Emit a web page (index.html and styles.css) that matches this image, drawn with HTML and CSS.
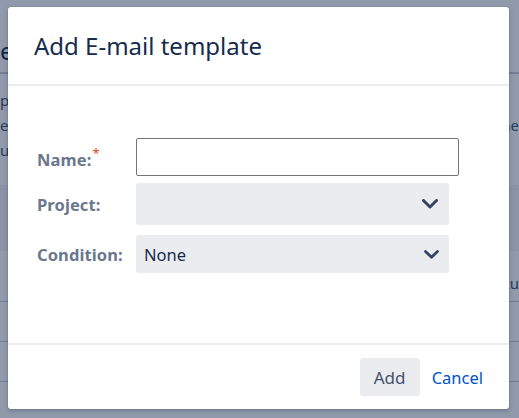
FILE: index.html
```html
<!DOCTYPE html>
<html>
<head>
<meta charset="utf-8">
<link rel="stylesheet" href="styles.css">
</head>
<body>
<div class="page">
  <div class="page-head"><span class="frag-title">e</span></div>
  <div class="page-text">
    <div class="trow"><span class="frag">p</span></div>
    <div class="trow"><span class="frag">es</span><span class="frag frag-r">ne</span></div>
    <div class="trow"><span class="frag">u</span></div>
  </div>
  <div class="band"></div>
  <div class="trow trow-ru"><span></span><span class="frag frag-r">Ru</span></div>
  <div class="rows">
    <div class="row"></div>
    <div class="row"></div>
    <div class="row"></div>
  </div>
</div>
<div class="overlay"></div>
<div class="modal">
  <div class="modal-header"><h2 class="modal-title">Add E-mail template</h2></div>
  <div class="modal-body">
    <div class="form-row">
      <label class="label">Name:<span class="req">*</span></label>
      <input class="text-input" type="text">
    </div>
    <div class="form-row">
      <label class="label">Project:</label>
      <div class="select select-lg"><span class="select-value"></span>
        <svg class="chev" viewBox="0 0 16 10" width="16" height="10"><polyline points="1.5,1.5 8,8 14.5,1.5" fill="none" stroke="#344563" stroke-width="3" stroke-linecap="round" stroke-linejoin="round"/></svg>
      </div>
    </div>
    <div class="form-row">
      <label class="label">Condition:</label>
      <div class="select"><span class="select-value">None</span>
        <svg class="chev" viewBox="0 0 15 9" width="15" height="9"><polyline points="1.5,1.5 7.5,7.2 13.5,1.5" fill="none" stroke="#344563" stroke-width="2.8" stroke-linecap="round" stroke-linejoin="round"/></svg>
      </div>
    </div>
  </div>
  <div class="modal-footer">
    <button class="btn">Add</button>
    <a class="link">Cancel</a>
  </div>
</div>
</body>
</html>
```

FILE: styles.css
```css
* { box-sizing: border-box; }
html, body { margin: 0; padding: 0; }
body {
  width: 519px; height: 418px; overflow: hidden;
  font-family: "Noto Sans", "Open Sans", sans-serif;
  background: #fff;
  position: relative;
}
.page { color: #172b4d; }
.page-head { height: 74px; border-bottom: 2px solid #c8ccd4; display: flex; align-items: flex-end; padding: 0 0 6px 0; }
.frag-title { font-size: 24px; line-height: 30px; margin-left: 0; }
.page-text { padding-top: 16px; color: #42526e; font-size: 14px; }
.trow { height: 25px; line-height: 20px; display: flex; justify-content: space-between; }
.frag { font-size: 15px; color: #42526e; margin-left: 0; }
.frag-r { margin-right: 0; }
.band { margin-top: 20px; height: 66px; background: #f4f5f7; }
.trow-ru { margin-top: 22px; }
.rows { margin-top: 3px; }
.row { height: 40px; border-top: 1px solid #c1c7d0; }
.overlay {
  position: absolute; inset: 0;
  background: rgba(9, 30, 66, 0.45);
}
.modal {
  position: absolute; left: 8px; top: 7px; width: 501px; height: 402px;
  background: #fff; border-radius: 3px;
  display: flex; flex-direction: column;
  box-shadow: 0 0 1px rgba(9,30,66,0.3), 0 2px 4px rgba(9,30,66,0.25);
}
.modal-header { height: 79px; border-bottom: 2px solid #ebecf0; padding: 24px 26px 0; }
.modal-title { margin: 0; font-size: 24px; font-weight: 400; color: #172b4d; line-height: 30px; }
.modal-body { flex: 1; padding: 52px 0 0 29px; display: flex; flex-direction: column; }
.form-row { display: flex; align-items: center; }
.form-row + .form-row { margin-top: 7px; }
.form-row:nth-child(3) { margin-top: 10px; }
.label { width: 99px; font-size: 16.5px; font-weight: 700; color: #6b778c; letter-spacing: 0.1px; }
.req { color: #e5432a; font-weight: 400; font-size: 13px; vertical-align: 8px; margin-left: 1px; }
.text-input { width: 323px; height: 38px; border: 1px solid #767676; border-radius: 2px; background: #fff; padding: 0 8px; font: inherit; }
.select { width: 313px; height: 38px; background: #ebecf0; border-radius: 3px; display: flex; align-items: center; justify-content: space-between; padding: 0 10px 0 8px; }
.select-lg { height: 42px; padding-right: 11px; }
.select-value { font-size: 16.5px; color: #172b4d; }
.chev { display: block; }
.modal-footer { height: 66px; border-top: 2px solid #ebecf0; display: flex; justify-content: flex-end; align-items: center; padding: 0 26px 0 0; gap: 12px; }
.btn { width: 60px; height: 38px; border: none; border-radius: 3px; background: #ebecf0; color: #42526e; font: inherit; font-size: 17px; padding: 0; }
.link { color: #0052cc; font-size: 16.5px; }
```
